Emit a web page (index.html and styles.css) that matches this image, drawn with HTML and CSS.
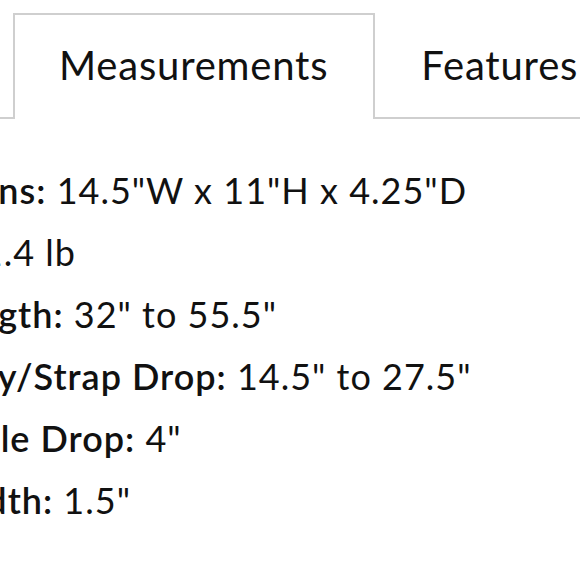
FILE: index.html
```html
<!DOCTYPE html>
<html lang="en">
<head>
<meta charset="utf-8">
<title>Product details</title>
<link rel="stylesheet" href="styles.css">
</head>
<body>
<div class="page">
  <div class="tabs">
    <div class="tab active">Measurements</div>
    <div class="tab">Features</div>
  </div>
  <ul class="specs">
    <li><b>Dimensions:</b> 14.5"W x 11"H x 4.25"D</li>
    <li><b>Weight:</b> 1.4 lb</li>
    <li><b>Strap Length:</b> 32" to 55.5"</li>
    <li><b>Crossbody/Strap Drop:</b> 14.5" to 27.5"</li>
    <li><b>Top Handle Drop:</b> 4"</li>
    <li><b>Strap Width:</b> 1.5"</li>
  </ul>
</div>
</body>
</html>
```
FILE: styles.css
```css
html, body {
  margin: 0;
  padding: 0;
  background: #fff;
}
body {
  width: 580px;
  height: 580px;
  overflow: hidden;
  font-family: Lato, "Open Sans", sans-serif;
  color: #111;
}
.page {
  padding-top: 13px;
}
.tabs {
  display: flex;
  padding-left: 13px;
  border-bottom: 2px solid #cfcfcf;
  white-space: nowrap;
}
.tab {
  box-sizing: border-box;
  height: 106px;
  padding: 0 45px 5px 44px;
  display: flex;
  align-items: center;
  font-size: 40px;
  letter-spacing: 0.8px;
  border: 2px solid transparent;
  border-bottom: 0;
  margin-bottom: -2px;
}
.tab.active {
  border-color: #cfcfcf;
  background: #fff;
}
.specs {
  list-style: none;
  margin: 40px 0 0 -160px;
  padding: 0;
  font-size: 36px;
  line-height: 62px;
  letter-spacing: 1px;
  white-space: nowrap;
}
.specs b {
  font-weight: 600;
}
```
